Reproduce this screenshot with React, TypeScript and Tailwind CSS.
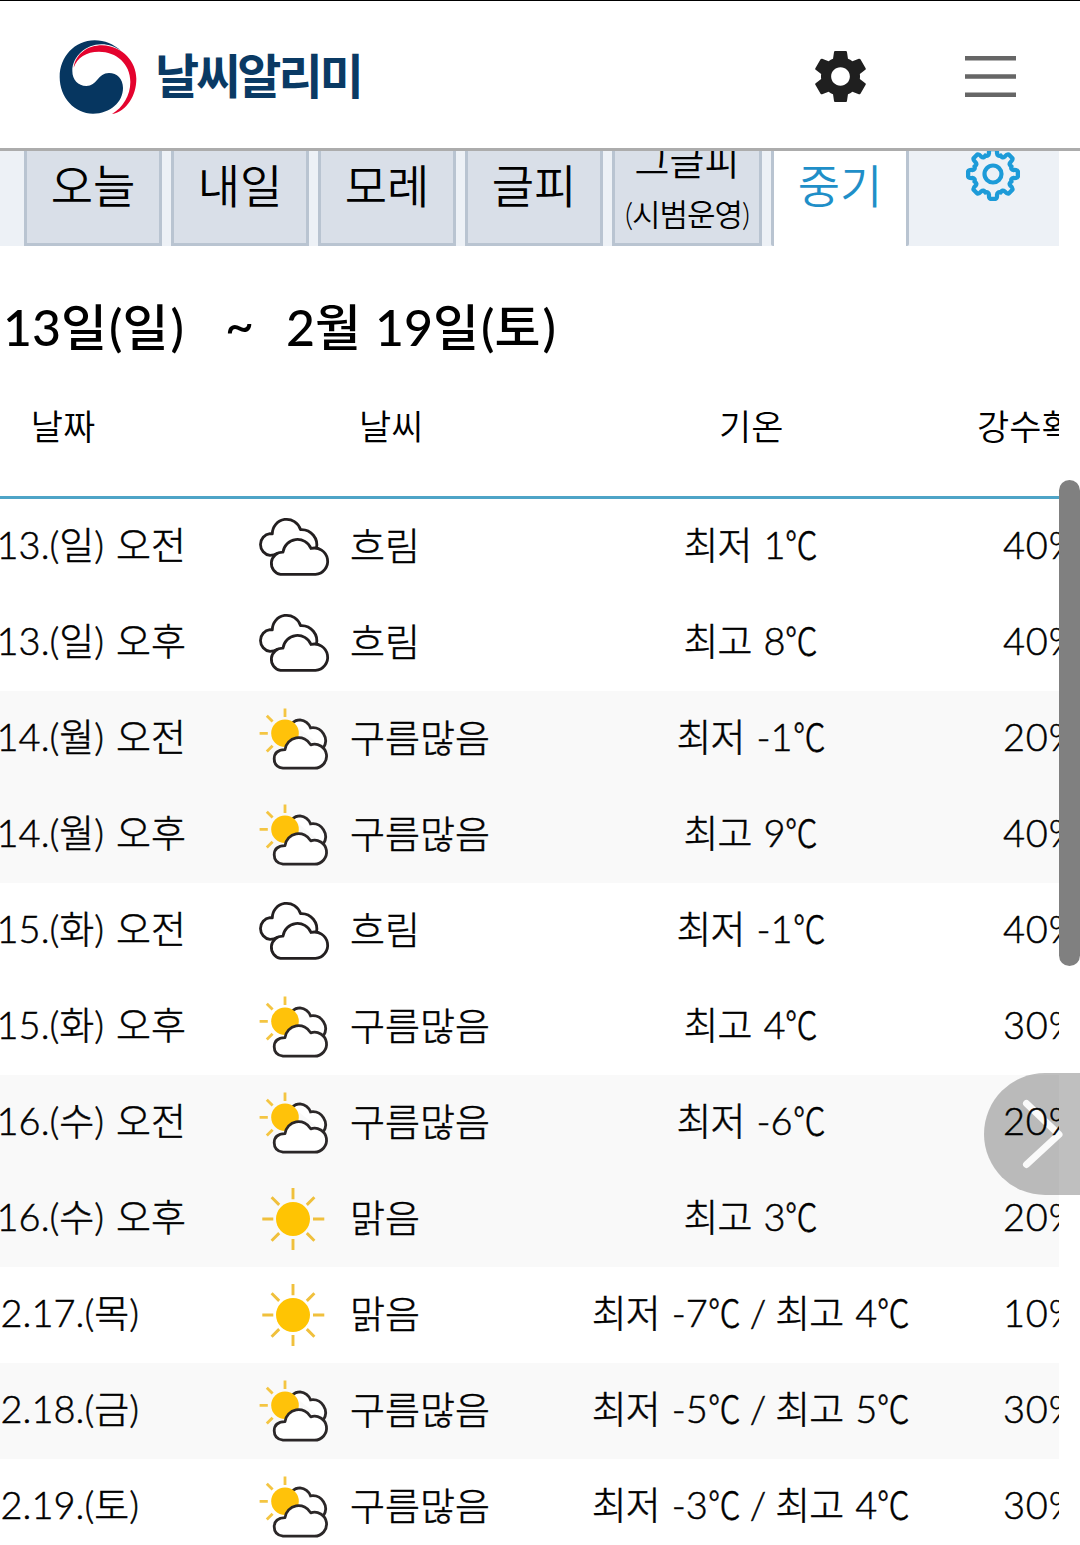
import { Fragment, type ReactNode } from 'react';

type Sky = 'cloudy' | 'partly' | 'clear';

const LABEL: Record<Sky, string> = { cloudy: '흐림', partly: '구름많음', clear: '맑음' };

const ROWS: { day: string; half?: string; sky: Sky; temps: [string, string][]; rain: string; shade?: boolean }[] = [
  { day: '2.13.(일)', half: '오전', sky: 'cloudy', temps: [['최저', '1']], rain: '40%' },
  { day: '2.13.(일)', half: '오후', sky: 'cloudy', temps: [['최고', '8']], rain: '40%' },
  { day: '2.14.(월)', half: '오전', sky: 'partly', temps: [['최저', '-1']], rain: '20%', shade: true },
  { day: '2.14.(월)', half: '오후', sky: 'partly', temps: [['최고', '9']], rain: '40%', shade: true },
  { day: '2.15.(화)', half: '오전', sky: 'cloudy', temps: [['최저', '-1']], rain: '40%' },
  { day: '2.15.(화)', half: '오후', sky: 'partly', temps: [['최고', '4']], rain: '30%' },
  { day: '2.16.(수)', half: '오전', sky: 'partly', temps: [['최저', '-6']], rain: '20%', shade: true },
  { day: '2.16.(수)', half: '오후', sky: 'clear', temps: [['최고', '3']], rain: '20%', shade: true },
  { day: '2.17.(목)', sky: 'clear', temps: [['최저', '-7'], ['최고', '4']], rain: '10%' },
  { day: '2.18.(금)', sky: 'partly', temps: [['최저', '-5'], ['최고', '5']], rain: '30%', shade: true },
  { day: '2.19.(토)', sky: 'partly', temps: [['최저', '-3'], ['최고', '4']], rain: '30%' },
];

function SkyIcon({ sky }: { sky: Sky }) {
  return (
    <svg width="76" height="66" viewBox="0 0 76 66" fill="none" className="mt-0.5 shrink-0">
      {sky === 'cloudy' && (
        <g stroke="#231f20" strokeWidth="2.8" strokeLinejoin="round" fill="#fff">
          <path d="M22 38 Q18 40.4 14 40.4 A11 11 0 0 1 14 18.6 L16.3 18.8 A14.4 14.4 0 0 1 44.5 14.6 A15.4 15.4 0 0 1 60.3 34" />
          <path d="M27 37.2 A14.6 14.6 0 0 1 55 33.5 A13.2 13.2 0 1 1 59.5 59.4 H24.5 A11.2 11.2 0 0 1 27 37.2Z" />
        </g>
      )}
      {sky === 'partly' && (
        <g>
          <path
            d="M29 1.5V10M10.8 8.8L16.6 14.6M3.6 26.3H11.8M10.8 44.6L16.6 38.8"
            stroke="#f4c542"
            strokeWidth="2.8"
          />
          <path
            d="M36.5 15.8 Q39.5 12.8 44 12.8 A13 13 0 0 1 54.6 20.9 A13 13 0 0 1 67.3 41"
            stroke="#2b2728"
            strokeWidth="2.8"
            fill="#fff"
          />
          <circle cx="29" cy="26.3" r="13.8" fill="#ffc20a" />
          <path
            d="M29 42.6 A13.8 13.8 0 0 1 54.8 37.8 A12 12 0 1 1 58.5 61.2 H27 Q18.2 60 18.2 51.8 Q18.2 43 29 42.6Z"
            stroke="#2b2728"
            strokeWidth="2.8"
            strokeLinejoin="round"
            fill="#fff"
          />
        </g>
      )}
      {sky === 'clear' && (
        <g>
          <path
            d="M37 1V12.3M37 52V63M6.3 32H17.3M57 32H68.3M15.6 10.3L23.2 17.9M50.8 46.1L58.4 53.7M58.4 10.3L50.8 17.9M23.2 46.1L15.6 53.7"
            stroke="#f0c03c"
            strokeWidth="2.9"
          />
          <circle cx="37" cy="32" r="17" fill="#ffc403" />
        </g>
      )}
    </svg>
  );
}

function Taegeuk() {
  return (
    <svg width="80" height="77" viewBox="55 53 240 231">
      <path
        fill="#063660"
        d="M245 92C222 72 195 60 165 60C105 60 60 110 60 170C60 232 105 280 160 280C212 280 250 245 250 203C250 175 232 158 208 158C175 158 172 197 140 197C115 197 98 178 98 152C98 108 140 72 185 72C208 72 228 80 245 92Z"
      />
      <path
        fill="#e4032e"
        d="M102 142C108 100 145 75 187 75C250 78 290 125 290 175C290 225 262 272 217 281C250 262 272 225 272 185C272 130 230 94 178 94C140 94 112 112 102 142Z"
      />
    </svg>
  );
}

function polar(deg: number, r: number) {
  const t = (deg * Math.PI) / 180;
  return `${(28 + r * Math.sin(t)).toFixed(2)} ${(28 - r * Math.cos(t)).toFixed(2)}`;
}

const COG = Array.from({ length: 8 }, (_, k) => {
  const a = k * 45;
  return `${k ? 'L' : 'M'}${polar(a - 6, 25)}L${polar(a + 6, 25)}Q${polar(a + 10, 24.5)} ${polar(a + 11, 21)}Q${polar(a + 14, 18)} ${polar(a + 22.5, 20)}Q${polar(a + 31, 18)} ${polar(a + 34, 21)}Q${polar(a + 35, 24.5)} ${polar(a + 39, 25)}`;
}).join('');

function Cog() {
  return (
    <svg width="56" height="56" viewBox="0 0 56 56" fill="none" stroke="#1d9bd8" strokeWidth="4.3" strokeLinejoin="round">
      <path d={COG + 'Z'} />
      <circle cx="28" cy="28" r="8.5" strokeWidth="4.2" />
    </svg>
  );
}

function Celsius() {
  return <span className="-mr-[5px] inline-block origin-left scale-x-[0.86]">℃</span>;
}

function Tab({ children }: { children: ReactNode }) {
  return (
    <div className="flex h-[95px] w-[138px] justify-center border-x-[3px] border-b-[3px] border-[#b9c4d1] bg-[#d9dfe8] text-[46px] leading-[69px]">
      {children}
    </div>
  );
}

export default function App() {
  return (
    <div className="relative h-[1545px] w-[1080px] overflow-hidden whitespace-nowrap bg-white font-[Lato,'Noto_Sans_CJK_KR',sans-serif] font-[350] text-black">
      <header className="flex h-[151px] items-start border-t border-b-[3px] border-t-black border-b-[#acacac] bg-white">
        <div className="ml-[58px] mt-[37px]">
          <Taegeuk />
        </div>
        <div className="ml-[17px] mt-10 text-[48px] font-bold leading-[70px] tracking-[-3px] text-[#0a3a64]">날씨알리미</div>
        <div className="ml-auto mr-16 mt-[50px] flex items-center gap-[99px]">
          <svg width="51" height="51" viewBox="2.2 2 19.6 20" preserveAspectRatio="none" fill="#1f1f1f">
            <path d="M19.43 12.98c.04-.32.07-.64.07-.98s-.03-.66-.07-.98l2.11-1.65c.19-.15.24-.42.12-.64l-2-3.46c-.12-.22-.39-.3-.61-.22l-2.49 1c-.52-.4-1.08-.73-1.69-.98l-.38-2.65C14.46 2.18 14.25 2 14 2h-4c-.25 0-.46.18-.49.42l-.38 2.65c-.61.25-1.17.59-1.69.98l-2.49-1c-.23-.09-.49 0-.61.22l-2 3.46c-.13.22-.07.49.12.64l2.11 1.65c-.04.32-.07.65-.07.98s.03.66.07.98l-2.11 1.65c-.19.15-.24.42-.12.64l2 3.46c.12.22.39.3.61.22l2.49-1c.52.4 1.08.73 1.69.98l.38 2.65c.03.24.24.42.49.42h4c.25 0 .46-.18.49-.42l.38-2.65c.61-.25 1.17-.59 1.69-.98l2.49 1c.23.09.49 0 .61-.22l2-3.46c.12-.22.07-.49-.12-.64l-2.11-1.65zM12 15.6c-1.99 0-3.6-1.61-3.6-3.6s1.61-3.6 3.6-3.6 3.6 1.61 3.6 3.6-1.61 3.6-3.6 3.6z" />
          </svg>
          <svg width="51" height="41" viewBox="0 0 51 41" fill="#666">
            <path d="M0 0h51v4.4H0zM0 18.3h51v4.4H0zM0 36.6h51v4.4H0z" />
          </svg>
        </div>
      </header>

      <main className="w-[1059px] overflow-hidden">
        <nav className="flex h-[95px] gap-[9px] bg-[#edf1f6] pl-6">
          <Tab>오늘</Tab>
          <Tab>내일</Tab>
          <Tab>모레</Tab>
          <Tab>글피</Tab>
          <div className="flex h-[95px] w-[150px] flex-col items-center overflow-hidden border-x-[3px] border-b-[3px] border-[#b9c4d1] bg-[#d9dfe8]">
            <span className="-mt-[19px] text-[38px] leading-[56px]">그글피</span>
            <span className="mt-[5px] text-[31px] leading-[42px] tracking-[-1px]">(시범운영)</span>
          </div>
          <div className="flex h-[95px] w-[138px] justify-center rounded-b-[2px] border-x-[3px] border-[#b9c4d1] bg-white text-[46px] leading-[69px] text-[#1f8fc8]">
            중기
          </div>
          <div className="-mt-[5px] ml-[47px] h-14">
            <Cog />
          </div>
        </nav>

        <h1 className="flex h-[142px] items-center pl-[3px] pt-5 text-[50px] font-medium">
          <span className="w-[222px]">
            13일<span className="pl-0.5">(일</span>
            <span className="pl-0.5">)</span>
          </span>
          <span className="w-[61px] pb-1">~</span>
          <span className="w-[89px]">2월</span>
          <span>
            19일<span className="pl-0.5">(토</span>
            <span className="pl-0.5">)</span>
          </span>
        </h1>

        <div className="flex h-[111px] border-b-[3px] border-[#4ea4c7] text-[35px] leading-[76px]">
          <span className="w-[126px] shrink-0 text-center">날짜</span>
          <span className="ml-[233px] w-[64px] shrink-0">날씨</span>
          <span className="ml-[296px] w-[64px] shrink-0">기온</span>
          <span className="ml-[194px] shrink-0">강수확률</span>
        </div>

        {ROWS.map((row, i) => (
          <div
            key={i}
            className={
              row.shade
                ? 'flex h-24 items-center bg-[#f9f9f9] text-[38px] font-light leading-[56px] [-webkit-text-stroke:0.5px_black]'
                : 'flex h-24 items-center bg-white text-[38px] font-light leading-[56px] [-webkit-text-stroke:0.5px_black]'
            }
          >
            <div className={row.half ? 'flex w-[186px] shrink-0 justify-end gap-3 pb-1.5' : 'flex w-[139px] shrink-0 justify-end pb-1.5'}>
              <span>{row.day}</span>
              {row.half && <span>{row.half}</span>}
            </div>
            <div className={row.half ? 'ml-[70px]' : 'ml-[117px]'}>
              <SkyIcon sky={row.sky} />
            </div>
            <span className="ml-[18px] w-[230px] shrink-0 pb-[5px]">{LABEL[row.sky]}</span>
            <div className="flex w-[342px] shrink-0 justify-center pb-[7px]">
              {row.temps.map(([kind, value], j) => (
                <Fragment key={kind}>
                  {j > 0 && <span className="px-[9px]">/</span>}
                  <span>
                    <span className="tracking-[-1px]">{kind}</span>
                    <span className="pl-3">{value}</span>
                    <Celsius />
                  </span>
                </Fragment>
              ))}
            </div>
            <span className="relative z-10 ml-[81px] shrink-0 pb-[7px] tracking-[0.8px]">{row.rain}</span>
          </div>
        ))}
      </main>

      <button className="absolute left-[984px] top-[1073px] h-[122px] w-24 rounded-l-full bg-black/25">
        <svg width="96" height="122" viewBox="0 0 96 122" fill="none">
          <path d="M42.5 30.5L75 61.5L42.5 91.5" stroke="#fafafa" strokeWidth="7" strokeLinecap="round" strokeLinejoin="round" />
        </svg>
      </button>
      <div className="absolute left-[1059px] top-[480px] z-20 h-[486px] w-[21px] rounded-full bg-[#808080]" />
    </div>
  );
}
